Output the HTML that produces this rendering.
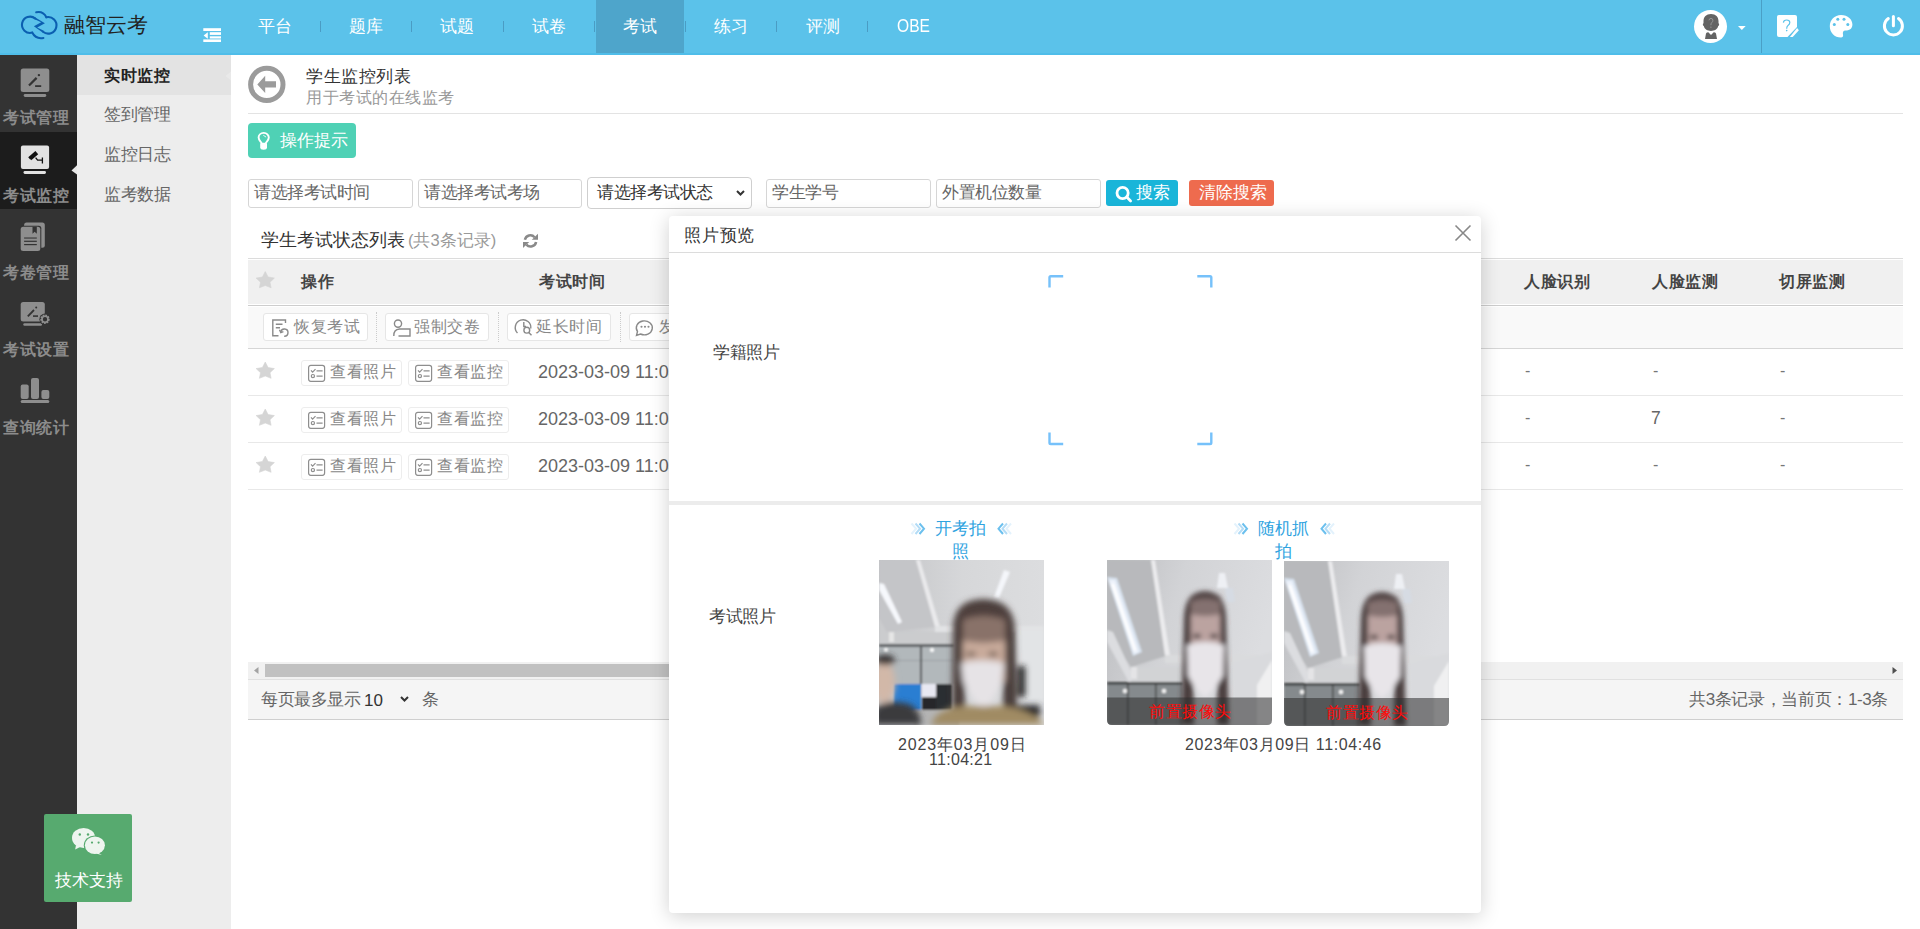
<!DOCTYPE html>
<html><head><meta charset="utf-8">
<style>
*{box-sizing:border-box;margin:0;padding:0}
html,body{width:1920px;height:929px;overflow:hidden;background:#fff;font-family:"Liberation Sans",sans-serif;color:#333}
.a{position:absolute}
.t{position:absolute;white-space:nowrap;line-height:1}
.nav{color:#fff;font-size:17.3px;margin-top:0.5px}
.sep{position:absolute;top:21px;width:1px;height:11px;background:#4a9cc4}
.slab{left:3px;font-size:16px;letter-spacing:.65px;font-weight:bold;color:#8c8c8c;margin-top:2px}
.subi{left:104px;font-size:16.5px;letter-spacing:-.4px;color:#666;margin-top:0px}
.inp{position:absolute;top:179px;height:29px;border:1px solid #d6d6d6;border-radius:3px;font-size:17px;letter-spacing:-.45px;color:#666;padding-left:5px;line-height:25px;white-space:nowrap}
.tb{position:absolute;top:313px;height:28px;border:1px solid #e6e6e6;border-radius:3px;background:#fff;font-size:16px;letter-spacing:.5px;color:#888;line-height:26px;white-space:nowrap}
.vb{position:absolute;height:26px;border:1px solid #ededed;border-radius:3px;background:#fff;font-size:16px;letter-spacing:.5px;color:#888;line-height:22px;white-space:nowrap}
.hd{font-size:16px;letter-spacing:.7px;font-weight:bold;color:#444}
.dash{font-size:16px;color:#777}
</style></head><body>
<!-- ============ TOP BAR ============ -->
<div class="a" style="left:0;top:0;width:1920px;height:55px;background:#5bc2ea"></div>
<div class="a" style="left:0;top:53px;width:1920px;height:2px;background:#4fbde9"></div>
<div class="a" style="left:596px;top:0;width:88px;height:53px;background:#4ea5cb"></div>
<svg class="a" style="left:0;top:0" width="80" height="55">
<g stroke="#0b5fb1" stroke-width="2.1" fill="none" stroke-linecap="round">
<path d="M36.2,12.3 Q43,10.8 46.4,17.2"/>
<path d="M46.4,17.2 A8.3,8.3 0 1 1 43,31.8"/>
<path d="M35.3,18.6 A8.1,8.1 0 1 0 32.2,32.6 Q35.8,39.5 43.4,38"/>
</g>
<path d="M34.9,17.3 L44.9,23.3 L37.2,27.6 L43.8,30.8 L42.6,32.6 L33.9,26.2 L41.2,22.2 L35.2,19.5 Z" fill="#0b5fb1"/>
</svg>
<div class="t" style="left:64px;top:15px;font-size:20.6px;color:#222">融智云考</div>
<svg class="a" style="left:200px;top:25px" width="25" height="20">
<rect x="3.3" y="3.2" width="17.7" height="2.8" fill="#fff"/>
<rect x="9.8" y="7.2" width="11.2" height="2.7" fill="#fff"/>
<rect x="9.8" y="11.3" width="11.2" height="2.2" fill="#fff"/>
<rect x="3.3" y="14.4" width="17.7" height="2.6" fill="#fff"/>
<path d="M3.6,10.4 L7.8,7.2 L7.8,13.8 Z" fill="#fff"/>
</svg>
<div class="t nav" style="left:258px;top:17px">平台</div>
<div class="sep" style="left:320px"></div>
<div class="t nav" style="left:349px;top:17px">题库</div>
<div class="sep" style="left:411px"></div>
<div class="t nav" style="left:440px;top:17px">试题</div>
<div class="sep" style="left:503px"></div>
<div class="t nav" style="left:532px;top:17px">试卷</div>
<div class="sep" style="left:594px"></div>
<div class="t nav" style="left:623px;top:17px">考试</div>
<div class="sep" style="left:685px"></div>
<div class="t nav" style="left:714px;top:17px">练习</div>
<div class="sep" style="left:776px"></div>
<div class="t nav" style="left:806px;top:17px">评测</div>
<div class="sep" style="left:867px"></div>
<div class="t nav" style="left:897px;top:16px;font-size:18.8px;transform:scaleX(.83);transform-origin:0 0">OBE</div>
<!-- avatar -->
<div class="a" style="left:1694px;top:10px;width:33px;height:33px;border-radius:50%;background:#fff"></div>
<svg class="a" style="left:1694px;top:10px" width="33" height="33">
<path d="M17,3.9 C21.8,3.9 24.5,7 24.5,11 L24.5,13.3 C25.4,13.8 25.4,15.6 24.2,16.1 C23.4,19.5 20.5,21 17,21 C13.5,21 10.6,19.5 9.8,16.1 C8.6,15.6 8.6,13.8 9.5,13.3 L9.5,11 C9.5,7 12.2,3.9 17,3.9 Z" fill="#636363"/>
<path d="M11,28.9 L12,23.6 Q12.6,22.2 14.3,22.2 L17,25 L19.7,22.2 Q21.4,22.2 22,23.6 L23,28.9 Z" fill="#636363"/>
<path d="M15,10.3 Q15.2,8.4 17,8.4 Q18.9,8.4 18.9,10.3 Q18.9,11.8 17.6,12.8 Q16.9,13.4 16.9,15.2" stroke="#9a9a9a" stroke-width="0.9" fill="none"/>
<circle cx="16.9" cy="17.2" r="0.6" fill="#9a9a9a"/>
</svg>
<svg class="a" style="left:1736px;top:24px" width="12" height="8"><path d="M2,2 L9.7,2 L5.85,6 Z" fill="#fff"/></svg>
<div class="a" style="left:1761px;top:0;width:1px;height:53px;background:#4a9fc6"></div>
<svg class="a" style="left:1770px;top:8px" width="140" height="38">
<path d="M8.8,7 L25,7 Q27,7 27,9 L27,18.9 L17.5,28.9 L9,28.9 Q7,28.9 7,26.9 L7,8.8 Q7,7 8.8,7 Z" fill="#fff"/>
<path d="M19.9,28.9 L22.7,28.9 L28.9,22.3 L27.1,19.9 Z" fill="#fff"/>
<path d="M13.4,14.6 Q13.6,12 16.6,12 Q19.8,12 19.8,14.6 Q19.8,16.4 18,17.6 Q16.7,18.6 16.7,20.8" stroke="#5bc2ea" stroke-width="1.2" fill="none"/>
<circle cx="16.7" cy="22.6" r="0.8" fill="#5bc2ea"/>
<path d="M71,7 C78,7 82.4,11.5 82.4,16.5 C82.4,21 79,22.5 75.5,22.5 C73,22.5 72.5,24.5 73,26.5 C73.5,28.5 72.5,29.5 71,29.5 C64.5,29.5 59.8,24.5 59.8,18.2 C59.8,12 64.5,7 71,7 Z" fill="#fff"/>
<circle cx="67.8" cy="11.3" r="1.5" fill="#5bc2ea"/><circle cx="74" cy="11.3" r="1.5" fill="#5bc2ea"/>
<circle cx="64.3" cy="16.4" r="1.5" fill="#5bc2ea"/><circle cx="77.8" cy="16.4" r="1.5" fill="#5bc2ea"/>
<path d="M118.3,10.5 A9,9 0 1 0 128.5,10.5" stroke="#fff" stroke-width="3" fill="none" stroke-linecap="round"/>
<path d="M123.4,8.5 L123.4,17.8" stroke="#fff" stroke-width="3" stroke-linecap="round"/>
</svg>

<!-- ============ LEFT SIDEBAR ============ -->
<div class="a" style="left:0;top:55px;width:77px;height:874px;background:#333"></div>
<div class="a" style="left:0;top:132px;width:77px;height:77px;background:#1c1c1c"></div>
<svg class="a" style="left:0;top:55px" width="77" height="400">
<!-- icon1 -->
<g fill="#8e8e8e">
<rect x="20.7" y="13.4" width="28.6" height="23.7" rx="2.5"/>
<rect x="23.7" y="39" width="22.6" height="2.9" rx="1.4"/>
</g>
<path d="M29,30.5 L36.6,22.9" stroke="#333" stroke-width="2.2"/>
<circle cx="38.9" cy="20.1" r="1.2" fill="#333"/>
<rect x="35.1" y="30.2" width="6.1" height="1.8" fill="#333"/>
<!-- icon2 active -->
<g fill="#e2e2e2">
<rect x="20.9" y="90.6" width="28.2" height="23.3" rx="2"/>
<rect x="23.5" y="116" width="22.5" height="3" rx="1.4"/>
</g>
<path d="M29.6,103.8 L36.8,97.7" stroke="#111" stroke-width="4.3"/>
<path d="M35.6,102.6 L37.6,105.2 L42.4,105.2 M42.4,102.5 L42.4,108.6" stroke="#111" stroke-width="1.3" fill="none"/><circle cx="30.3" cy="105.8" r="1.3" fill="#e2e2e2"/>
<!-- icon3 -->
<rect x="24.1" y="167.5" width="20.7" height="25.2" rx="2.5" fill="#8e8e8e"/>
<rect x="19.7" y="170.8" width="21.6" height="26.1" rx="2.5" fill="#333"/>
<rect x="20.7" y="171.8" width="19.6" height="24.1" rx="2.5" fill="#8e8e8e"/>
<path d="M32.5,171.8 L36.8,171.8 L36.8,178.7 L34.65,176.7 L32.5,178.7 Z" fill="#333"/>
<rect x="24.1" y="182.2" width="12.7" height="1.7" fill="#555"/>
<rect x="24.1" y="185.7" width="12.7" height="1.2" fill="#333"/>
<rect x="24.1" y="189" width="12.7" height="1.2" fill="#333"/>
<!-- icon4 -->
<rect x="20.7" y="247" width="24.1" height="19.6" rx="2.5" fill="#8e8e8e"/>
<rect x="23.3" y="268.3" width="18.7" height="2.4" rx="1.2" fill="#8e8e8e"/>
<path d="M27.8,261.3 L34,255" stroke="#333" stroke-width="1.8"/>
<circle cx="36.2" cy="252.4" r="1" fill="#333"/>
<rect x="33" y="260.3" width="5" height="1.6" fill="#333"/>
<circle cx="45" cy="264.2" r="5.6" fill="#333"/>
<circle cx="45" cy="264.2" r="3.6" fill="none" stroke="#8e8e8e" stroke-width="2.2" stroke-dasharray="1.6 0.8"/>
<circle cx="45" cy="264.2" r="3" fill="none" stroke="#8e8e8e" stroke-width="1.6"/>
<!-- icon5 -->
<g fill="#8e8e8e">
<rect x="20.7" y="329.5" width="8" height="14.5" rx="2"/>
<rect x="31" y="323" width="8" height="21" rx="2"/>
<rect x="41.4" y="335.1" width="7.9" height="8.9" rx="2"/>
<rect x="20.7" y="345" width="28.6" height="3" rx="1.5"/>
</g>
<!-- pointer triangle -->
<path d="M71.5,115.5 L77.5,109.7 L77.5,119.8 Z" fill="#e6e6e6"/>
</svg>
<div class="t slab" style="top:108px">考试管理</div>
<div class="t slab" style="top:186px">考试监控</div>
<div class="t slab" style="top:263px">考卷管理</div>
<div class="t slab" style="top:340px">考试设置</div>
<div class="t slab" style="top:418px">查询统计</div>

<!-- ============ SUBMENU ============ -->
<div class="a" style="left:77px;top:55px;width:154px;height:874px;background:#ededed"></div>
<div class="a" style="left:77px;top:55px;width:154px;height:40px;background:#e3e3e3"></div>
<svg class="a" style="left:224px;top:68px" width="8" height="16"><path d="M1.5,8 L7,3.5 L7,12.5 Z" fill="#e9e9e9"/></svg>
<div class="t subi" style="top:67px;font-weight:bold;color:#222;font-size:16px;letter-spacing:.65px;margin-top:1px">实时监控</div>
<div class="t subi" style="top:106px">签到管理</div>
<div class="t subi" style="top:146px">监控日志</div>
<div class="t subi" style="top:186px">监考数据</div>

<!-- tech support -->
<div class="a" style="left:44px;top:814px;width:88px;height:88px;background:#57aa6f;border-radius:2px"></div>
<svg class="a" style="left:44px;top:816px" width="88" height="88">
<ellipse cx="39.6" cy="21.9" rx="11.6" ry="10" fill="#eef5ef"/>
<path d="M32,29 L31.2,33.6 L37,30.5 Z" fill="#eef5ef"/>
<ellipse cx="50.9" cy="29.3" rx="11.1" ry="9.9" fill="#57aa6f"/>
<ellipse cx="50.9" cy="29.3" rx="10" ry="8.8" fill="#eef5ef"/>
<path d="M54,36.5 L57.8,39 L52,37.5 Z" fill="#eef5ef"/>
<circle cx="35.8" cy="18.5" r="1.2" fill="#57aa6f"/><circle cx="44" cy="18.5" r="1.2" fill="#57aa6f"/>
<circle cx="48" cy="26.6" r="1.1" fill="#57aa6f"/><circle cx="54.6" cy="26.6" r="1.1" fill="#57aa6f"/>
</svg>
<div class="t" style="left:55px;top:872px;font-size:17px;color:#fff">技术支持</div>

<!-- ============ CONTENT HEADER ============ -->
<svg class="a" style="left:246px;top:63px" width="42" height="42">
<circle cx="20.8" cy="21.4" r="16.2" stroke="#9b9b9b" stroke-width="5" fill="none"/>
<path d="M11.3,21.4 L19.2,12.8 L19.2,18.2 L30,18.2 L30,24.4 L19.2,24.4 L19.2,30 Z" fill="#9b9b9b"/>
</svg>
<div class="t" style="left:306px;top:68px;font-size:17.4px;letter-spacing:.5px;color:#333">学生监控列表</div>
<div class="t" style="left:306px;top:89px;font-size:16.1px;letter-spacing:.55px;color:#999">用于考试的在线监考</div>
<div class="a" style="left:248px;top:113px;width:1655px;height:1px;background:#e3e3e3"></div>

<div class="a" style="left:248px;top:123px;width:108px;height:35px;background:#4fd1b5;border-radius:4px"></div>
<svg class="a" style="left:254px;top:130px" width="20" height="22">
<path d="M9.7,2.9 C6.6,2.9 4.6,5.1 4.6,7.6 C4.6,9.6 5.9,10.8 6.9,12 C7.5,12.7 7.8,13.2 7.8,13.6 L11.6,13.6 C11.6,13.2 11.9,12.7 12.5,12 C13.5,10.8 14.8,9.6 14.8,7.6 C14.8,5.1 12.8,2.9 9.7,2.9 Z" stroke="#fff" stroke-width="1.9" fill="none"/>
<path d="M6.2,13.3 L13,13.3 L13,17.3 Q13,19.8 9.6,19.8 Q6.2,19.8 6.2,17.3 Z" fill="#fff"/>
<path d="M9.3,5.3 L12.1,7.1" stroke="#e8fbf6" stroke-width="1"/>
</svg>
<div class="t" style="left:280px;top:132px;font-size:17px;color:#fff">操作提示</div>

<!-- filters -->
<div class="inp" style="left:248px;width:165px">请选择考试时间</div>
<div class="inp" style="left:418px;width:164px">请选择考试考场</div>
<div class="inp" style="left:587px;top:177px;height:32px;width:165px;color:#333;padding-left:9px;line-height:30px;border-color:#cfcfcf;border-radius:4px">请选择考试状态</div>
<svg class="a" style="left:734px;top:188px" width="14" height="12"><path d="M3,3 L6.5,6.5 L10,3" stroke="#333" stroke-width="2" fill="none"/></svg>
<div class="inp" style="left:766px;width:165px">学生学号</div>
<div class="inp" style="left:936px;width:165px">外置机位数量</div>
<div class="a" style="left:1106px;top:180px;width:72px;height:26px;background:#1ab5d9;border-radius:3px"></div>
<svg class="a" style="left:1112px;top:182px" width="24" height="22">
<circle cx="10.6" cy="11" r="5.6" stroke="#fff" stroke-width="2.8" fill="none"/>
<path d="M15,15.3 L18.6,18.9" stroke="#fff" stroke-width="2.8" stroke-linecap="round"/>
</svg>
<div class="t" style="left:1136px;top:184px;font-size:17px;color:#fff">搜索</div>
<div class="a" style="left:1189px;top:180px;width:85px;height:26px;background:#ee6b4e;border-radius:3px"></div>
<div class="t" style="left:1199px;top:184px;font-size:17px;color:#fff">清除搜索</div>

<!-- ============ TABLE ============ -->
<div class="t" style="left:261px;top:232px;font-size:17.8px;color:#333">学生考试状态列表</div>
<div class="t" style="left:408px;top:232px;font-size:16.5px;color:#999">(共3条记录)</div>
<svg class="a" style="left:520px;top:231px" width="20" height="20">
<path d="M4.9,8.8 A5.6,5.6 0 0 1 14.6,6.2" stroke="#8a8a8a" stroke-width="2.5" fill="none"/>
<path d="M11.8,8.8 L18,8.8 L18,2.8 Z" fill="#8a8a8a"/>
<path d="M16.1,11 A5.6,5.6 0 0 1 6.4,13.6" stroke="#8a8a8a" stroke-width="2.5" fill="none"/>
<path d="M3,11 L9.2,11 L3,17 Z" fill="#8a8a8a"/>
</svg>
<div class="a" style="left:248px;top:258px;width:1655px;height:1px;background:#dcdcdc"></div>
<div class="a" style="left:248px;top:260px;width:1655px;height:44px;background:#f0f0f0"></div>
<div class="a" style="left:248px;top:305px;width:1655px;height:1px;background:#cdcdcd"></div>
<div class="a" style="left:248px;top:307px;width:1655px;height:41px;background:#f9f9f9"></div>
<div class="a" style="left:248px;top:348px;width:1655px;height:1px;background:#d6d6d6"></div>
<div class="a" style="left:248px;top:395px;width:1655px;height:1px;background:#e8e8e8"></div>
<div class="a" style="left:248px;top:442px;width:1655px;height:1px;background:#e8e8e8"></div>
<div class="a" style="left:248px;top:489px;width:1655px;height:1px;background:#e8e8e8"></div>

<svg class="a" style="left:255px;top:270px" width="20" height="220">
<defs><path id="st" d="M10.25,1.5 L13.1,7 L19.4,8.1 L15,12.2 L16.1,17.8 L10.25,15.5 L4.4,17.8 L5.5,12.2 L1.1,8.1 L7.4,7 Z" stroke="#d5d5d5" stroke-width=".6" stroke-linejoin="round"/></defs>
<use href="#st" fill="#d5d5d5"/>
<use href="#st" y="90.5" fill="#d5d5d5"/>
<use href="#st" y="137.5" fill="#d5d5d5"/>
<use href="#st" y="184.5" fill="#d5d5d5"/>
</svg>
<div class="t hd" style="left:301px;top:274px">操作</div>
<div class="t hd" style="left:539px;top:274px">考试时间</div>
<div class="t hd" style="left:1524px;top:274px">人脸识别</div>
<div class="t hd" style="left:1652px;top:274px">人脸监测</div>
<div class="t hd" style="left:1779px;top:274px">切屏监测</div>

<!-- toolbar -->
<div class="tb" style="left:263px;width:105px;padding-left:30px">恢复考试</div>
<div class="tb" style="left:385px;width:104px;padding-left:28px">强制交卷</div>
<div class="tb" style="left:507px;width:104px;padding-left:28px">延长时间</div>
<div class="tb" style="left:629px;width:60px;padding-left:29px">发</div>
<div class="a" style="left:376px;top:312px;width:0;height:30px;border-left:1px dotted #ccc"></div>
<div class="a" style="left:498px;top:312px;width:0;height:30px;border-left:1px dotted #ccc"></div>
<div class="a" style="left:620px;top:312px;width:0;height:30px;border-left:1px dotted #ccc"></div>
<svg class="a" style="left:263px;top:313px" width="420" height="28">
<g stroke="#8a8a8a" stroke-width="1.4" fill="none">
<path d="M22.5,10 L22.5,7 L9.8,7 L9.8,22.8 L15.5,22.8"/>
<path d="M12.8,11.2 L19.5,11.2 M12.8,14.8 L17,14.8"/>
<path d="M17.8,19.2 A3.6,3.6 0 1 1 21.2,23.2"/>
<path d="M16.5,16.8 L17.8,19.6 L20.4,18.6"/>
<circle cx="135" cy="10.6" r="3.6"/>
<path d="M130.8,23 Q130.5,16.5 136.5,16 L147,16 L147,23 L135.5,23"/>
<path d="M254.5,20 A7.8,7.8 0 1 1 267.8,15.5"/>
<path d="M260.8,9 L260.8,13.5 L263,13.5"/>
<circle cx="263.8" cy="17.2" r="2.9"/>
<path d="M265.8,19.4 L268.5,22.2"/>
<path d="M377.5,21 A8,7 0 1 0 374.5,18.5 L373.5,22.5 Z"/>
</g>
<g fill="#8a8a8a"><circle cx="378.5" cy="13.8" r="1.05"/><circle cx="382" cy="13.8" r="1.05"/><circle cx="385.5" cy="13.8" r="1.05"/></g>
</svg>

<!-- rows -->
<div class="vb" style="left:301px;top:360px;width:101px;padding-left:28px">查看照片</div>
<div class="vb" style="left:408px;top:360px;width:101px;padding-left:28px">查看监控</div>
<div class="vb" style="left:301px;top:407px;width:101px;padding-left:28px">查看照片</div>
<div class="vb" style="left:408px;top:407px;width:101px;padding-left:28px">查看监控</div>
<div class="vb" style="left:301px;top:454px;width:101px;padding-left:28px">查看照片</div>
<div class="vb" style="left:408px;top:454px;width:101px;padding-left:28px">查看监控</div>
<svg class="a" style="left:301px;top:360px" width="220" height="130">
<defs><g id="ck" stroke="#8e8e8e" stroke-width="1.2" fill="none">
<rect x="7.6" y="5.3" width="16" height="16" rx="2.2"/>
<path d="M10,10.3 L11.6,12.2 L14.5,9.2 M15.5,10.9 L21.6,10.9 M15.5,16.2 L21.6,16.2"/>
<circle cx="11.9" cy="16.1" r="1.6"/>
</g></defs>
<use href="#ck"/><use href="#ck" x="107"/>
<use href="#ck" y="47"/><use href="#ck" x="107" y="47"/>
<use href="#ck" y="94"/><use href="#ck" x="107" y="94"/>
</svg>
<div class="t" style="left:538px;top:363px;font-size:18px;color:#666">2023-03-09 11:04</div>
<div class="t" style="left:538px;top:410px;font-size:18px;color:#666">2023-03-09 11:04</div>
<div class="t" style="left:538px;top:457px;font-size:18px;color:#666">2023-03-09 11:04</div>
<div class="t dash" style="left:1525px;top:363px">-</div>
<div class="t dash" style="left:1653px;top:363px">-</div>
<div class="t dash" style="left:1780px;top:363px">-</div>
<div class="t dash" style="left:1525px;top:410px">-</div>
<div class="t" style="left:1651px;top:410px;font-size:17.5px;color:#666">7</div>
<div class="t dash" style="left:1780px;top:410px">-</div>
<div class="t dash" style="left:1525px;top:457px">-</div>
<div class="t dash" style="left:1653px;top:457px">-</div>
<div class="t dash" style="left:1780px;top:457px">-</div>

<!-- scrollbar -->
<div class="a" style="left:248px;top:662px;width:1655px;height:17px;background:#f1f1f1"></div>
<div class="a" style="left:265px;top:664px;width:700px;height:13px;background:#c1c1c1"></div>
<svg class="a" style="left:250px;top:664px" width="14" height="13"><path d="M4,6.5 L8.5,3 L8.5,10 Z" fill="#a3a3a3"/></svg>
<svg class="a" style="left:1887px;top:664px" width="14" height="13"><path d="M10,6.5 L5.5,3 L5.5,10 Z" fill="#505050"/></svg>
<!-- footer -->
<div class="a" style="left:248px;top:679px;width:1655px;height:41px;background:#f5f5f5;border-top:1px solid #e0e0e0;border-bottom:1px solid #cfcfcf"></div>
<div class="t" style="left:261px;top:691px;font-size:17px;letter-spacing:-.4px;color:#666">每页最多显示</div>
<div class="t" style="left:364px;top:692px;font-size:17px;color:#333">10</div>
<svg class="a" style="left:398px;top:694px" width="14" height="12"><path d="M3,3 L6.5,6.5 L10,3" stroke="#333" stroke-width="2" fill="none"/></svg>
<div class="t" style="left:422px;top:691px;font-size:17px;color:#666">条</div>
<div class="t" style="left:1689px;top:691px;font-size:17px;letter-spacing:-.35px;color:#666">共3条记录，当前页：1-3条</div>

<!-- ============ DIALOG ============ -->
<div class="a" style="left:669px;top:216px;width:812px;height:697px;background:#fff;border-radius:4px;box-shadow:0 3px 20px rgba(0,0,0,.19)"></div>
<div class="t" style="left:684px;top:227px;font-size:17px;letter-spacing:.8px;color:#333">照片预览</div>
<svg class="a" style="left:1452px;top:222px" width="22" height="22"><path d="M3.5,3.5 L18.5,18.5 M18.5,3.5 L3.5,18.5" stroke="#888" stroke-width="1.6"/></svg>
<div class="a" style="left:669px;top:252px;width:812px;height:1px;background:#dcdcdc"></div>
<div class="t" style="left:713px;top:344px;font-size:17px;letter-spacing:-.35px;color:#444">学籍照片</div>
<svg class="a" style="left:1040px;top:268px" width="180" height="185">
<g stroke="#76c1fa" stroke-width="2.4" fill="none">
<path d="M9.5,19.4 L9.5,9.6 Q9.5,8.3 10.8,8.3 L23.2,8.3"/>
<path d="M157.3,8.3 L170,8.3 Q171.3,8.3 171.3,9.6 L171.3,19.4"/>
<path d="M9.5,164.5 L9.5,174.7 Q9.5,176 10.8,176 L23.2,176"/>
<path d="M157.3,176 L170,176 Q171.3,176 171.3,174.7 L171.3,164.5"/>
</g>
</svg>
<div class="a" style="left:669px;top:501px;width:812px;height:4px;background:#ececec"></div>
<div class="t" style="left:709px;top:608px;font-size:17px;letter-spacing:-.35px;color:#444">考试照片</div>

<!-- start photo header -->
<svg class="a" style="left:905px;top:518px" width="115" height="22">
<g stroke-width="2" fill="none">
<path d="M6.5,5.5 L11,10.7 L6.5,16" stroke="#e3f2fc"/>
<path d="M10.5,5.5 L15,10.7 L10.5,16" stroke="#b3dcf6"/>
<path d="M14.5,5.5 L19,10.7 L14.5,16" stroke="#6cc0ee"/>
<path d="M98,5.5 L93.5,10.7 L98,16" stroke="#6cc0ee"/>
<path d="M102,5.5 L97.5,10.7 L102,16" stroke="#b3dcf6"/>
<path d="M106,5.5 L101.5,10.7 L106,16" stroke="#e3f2fc"/>
</g>
</svg>
<div class="t" style="left:935px;top:520px;font-size:17px;color:#2fa3df">开考拍</div>
<div class="t" style="left:952px;top:543px;font-size:17px;color:#2fa3df">照</div>
<svg class="a" style="left:1228px;top:518px" width="115" height="22">
<g stroke-width="2" fill="none">
<path d="M6.5,5.5 L11,10.7 L6.5,16" stroke="#e3f2fc"/>
<path d="M10.5,5.5 L15,10.7 L10.5,16" stroke="#b3dcf6"/>
<path d="M14.5,5.5 L19,10.7 L14.5,16" stroke="#6cc0ee"/>
<path d="M98,5.5 L93.5,10.7 L98,16" stroke="#6cc0ee"/>
<path d="M102,5.5 L97.5,10.7 L102,16" stroke="#b3dcf6"/>
<path d="M106,5.5 L101.5,10.7 L106,16" stroke="#e3f2fc"/>
</g>
</svg>
<div class="t" style="left:1258px;top:520px;font-size:17px;color:#2fa3df">随机抓</div>
<div class="t" style="left:1275px;top:543px;font-size:17px;color:#2fa3df">拍</div>

<svg class="a" style="left:879px;top:560px" width="165" height="165" viewBox="0 0 165 165">
<defs>
<filter id="b1" x="-10%" y="-10%" width="120%" height="120%"><feGaussianBlur stdDeviation="0.9"/></filter>
<filter id="b3" x="-20%" y="-20%" width="140%" height="140%"><feGaussianBlur stdDeviation="3"/></filter>
<linearGradient id="ceil1" x1="0" y1="0" x2="1" y2="0"><stop offset="0" stop-color="#c2c3c6"/><stop offset="0.5" stop-color="#d6d7d9"/><stop offset="1" stop-color="#dcdddf"/></linearGradient>
</defs>
<rect width="165" height="165" fill="url(#ceil1)"/>
<g filter="url(#b1)">
<path d="M0,0 L37,0 L57,67 L0,72 Z" fill="#c4c5c8"/>
<path d="M37,0 L41,0 L61,67 L56,67 Z" fill="#eaeaec"/>
<rect x="56" y="66" width="109" height="6" fill="#e2e3e5"/>
<path d="M0,58 L8,72 L75,72 L75,85 L0,85 Z" fill="#cbccce"/>
<rect x="10" y="72" width="5" height="10" fill="#e6e6e6"/>
<rect x="0" y="84" width="75" height="3" fill="#5f6265"/>
<path d="M0,23 L5,24 L23,62 L19,64 L0,30 Z" fill="#f6f8fc"/>
<path d="M125,10 L131,12 L120,38 L115,37 Z" fill="#f4f6fa"/>
<rect x="0" y="87" width="75" height="37" fill="#b2b8bb"/>
<rect x="0" y="100" width="75" height="1" fill="#9aa0a3"/>
<rect x="41" y="87" width="2" height="37" fill="#4d5153"/>
<circle cx="7" cy="90" r="2" fill="#fff"/><circle cx="53" cy="90" r="2" fill="#fff"/>
<rect x="15" y="124" width="27" height="27" fill="#2c7ed2"/>
<rect x="43" y="124" width="14" height="13" fill="#e8e8f2"/>
<rect x="43" y="137" width="14" height="14" fill="#25282c"/>
<rect x="57" y="124" width="16" height="27" fill="#2a2d33"/>
<rect x="135" y="72" width="30" height="78" fill="#e2e4e6"/>
<rect x="128" y="72" width="8" height="80" fill="#c0c2c4"/>
<rect x="35" y="150" width="45" height="15" fill="#b4b4b4"/>
</g>
<g filter="url(#b3)">
<ellipse cx="5" cy="122" rx="11" ry="21" fill="#d2b8a8"/>
<ellipse cx="6" cy="100" rx="10" ry="5" fill="#2e2a2a"/>
<path d="M-5,150 Q5,138 30,144 Q42,150 42,165 L-5,165 Z" fill="#3a3b3e"/>
<path d="M139,106 L146,106 L146,137 L139,137 Z" fill="#1c1c1e"/>
<rect x="137" y="145" width="24" height="12" fill="#2a2b2e"/>
<path d="M74,66 Q76,39 105,39 Q134,40 136,68 L138,158 L124,158 L124,70 L86,70 L86,158 L73,158 Z" fill="#4a3d3a"/>
<path d="M84,60 Q104,52 126,60 L126,122 L84,122 Z" fill="#c9ab9b"/>
<path d="M82,50 Q104,42 128,52 L128,80 Q104,86 82,80 Z" fill="#54443f" opacity=".55"/>
<ellipse cx="92" cy="94" rx="4.5" ry="2" fill="#3f3432"/><ellipse cx="114" cy="94" rx="4.5" ry="2" fill="#3f3432"/>
<path d="M82,103 Q103,98 125,103 L123,122 Q113,142 105,152 Q96,142 84,122 Z" fill="#e6e3e6"/>
<path d="M52,165 Q58,147 88,146 L122,146 Q152,149 166,165 Z" fill="#a08b63"/>
</g>
</svg>
<svg class="a" style="left:1107px;top:560px" width="165" height="165" viewBox="0 0 165 165">
<defs>
<filter id="c1a" x="-10%" y="-10%" width="120%" height="120%"><feGaussianBlur stdDeviation="0.9"/></filter>
<filter id="c3a" x="-20%" y="-20%" width="140%" height="140%"><feGaussianBlur stdDeviation="2.6"/></filter>
<linearGradient id="cga" x1="0" y1="0" x2="1" y2="0.3"><stop offset="0" stop-color="#bcbdc0"/><stop offset="0.45" stop-color="#d2d3d6"/><stop offset="1" stop-color="#dcdde0"/></linearGradient>
<clipPath id="cla"><path d="M0,0 L165,0 L165,160 Q165,165 160,165 L5,165 Q0,165 0,160 Z"/></clipPath>
</defs>
<g clip-path="url(#cla)">
<rect width="165" height="165" fill="url(#cga)"/>
<g filter="url(#c1a)">
<path d="M0,0 L44,0 L59,96 L24,107 L0,72 Z" fill="#b8b9bc"/>
<path d="M44,0 L48,0 L63,96 L58,96 Z" fill="#ececee"/>
<rect x="58" y="95" width="107" height="8" fill="#dadbdd"/>
<path d="M0,70 L6,72 L30,124 L23,124 L0,82 Z" fill="#dcdde0"/>
<rect x="24" y="107" width="52" height="17" fill="#d2d3d5"/>
<rect x="24" y="107" width="6" height="12" fill="#e4e4e6"/>
<path d="M0,17 L10,18 L35,92 L26,96 Z" fill="#d8e2ee"/><path d="M2,20 L8,20 L32,92 L27,94 Z" fill="#eef3fb"/>
<path d="M4,24 L7,24 L29,90 L27,91 Z" fill="#ffffff"/>
<path d="M112,13 L118,13 L121,28 L110,28 Z" fill="#eef0f4"/>
<path d="M118,28 L126,28 L128,42 L120,42 Z" fill="#d6dbe3"/>
<rect x="0" y="122" width="76" height="43" fill="#858a8d"/>
<rect x="0" y="122" width="76" height="2.5" fill="#3c3f41"/>
<rect x="20" y="124" width="1.5" height="41" fill="#444"/><rect x="48" y="124" width="1.5" height="41" fill="#444"/>
<circle cx="18" cy="131" r="2.2" fill="#f4f4f4"/><circle cx="57" cy="131" r="2.2" fill="#f4f4f4"/>
<path d="M127,102 L165,92 L165,165 L127,165 Z" fill="#d9dadd"/>
<path d="M150,125 L165,100 L165,165 L150,165 Z" fill="#f0f0f1"/>
</g>
<g filter="url(#c3a)">
<path d="M77,58 Q78,31 98,31 Q118,31 119,58 L122,165 L110,165 L111,62 L85,62 L87,165 L74,165 Z" fill="#4a3e3e"/>
<path d="M84,42 Q98,36 113,42 L113,96 L84,96 Z" fill="#bba3a0"/>
<path d="M83,36 Q98,30 114,36 L114,54 Q98,58 83,54 Z" fill="#5f5050" opacity=".6"/>
<ellipse cx="90" cy="76" rx="3.8" ry="2.2" fill="#3a3133"/><ellipse cx="107" cy="76" rx="3.8" ry="2.2" fill="#3a3133"/>
<path d="M80,85 Q98,79 117,85 L116,116 Q108,130 98,138 Q88,130 81,116 Z" fill="#e8e5e9"/>
</g>
</g>
<path d="M0,137.5 L165,137.5 L165,160 Q165,165 160,165 L5,165 Q0,165 0,160 Z" fill="rgba(45,45,45,.55)"/>
<text x="42" y="157" font-size="16" letter-spacing="0.6" fill="#ff0a0a" font-family="Liberation Sans">前置摄像头</text>
</svg>
<svg class="a" style="left:1284px;top:561px" width="165" height="165" viewBox="0 0 165 165">
<defs>
<filter id="c1b" x="-10%" y="-10%" width="120%" height="120%"><feGaussianBlur stdDeviation="0.9"/></filter>
<filter id="c3b" x="-20%" y="-20%" width="140%" height="140%"><feGaussianBlur stdDeviation="2.6"/></filter>
<linearGradient id="cgb" x1="0" y1="0" x2="1" y2="0.3"><stop offset="0" stop-color="#bcbdc0"/><stop offset="0.45" stop-color="#d2d3d6"/><stop offset="1" stop-color="#dcdde0"/></linearGradient>
<clipPath id="clb"><path d="M0,0 L165,0 L165,160 Q165,165 160,165 L5,165 Q0,165 0,160 Z"/></clipPath>
</defs>
<g clip-path="url(#clb)">
<rect width="165" height="165" fill="url(#cgb)"/>
<g filter="url(#c1b)">
<path d="M0,0 L44,0 L59,96 L24,107 L0,72 Z" fill="#b8b9bc"/>
<path d="M44,0 L48,0 L63,96 L58,96 Z" fill="#ececee"/>
<rect x="58" y="95" width="107" height="8" fill="#dadbdd"/>
<path d="M0,70 L6,72 L30,124 L23,124 L0,82 Z" fill="#dcdde0"/>
<rect x="24" y="107" width="52" height="17" fill="#d2d3d5"/>
<rect x="24" y="107" width="6" height="12" fill="#e4e4e6"/>
<path d="M0,17 L10,18 L35,92 L26,96 Z" fill="#d8e2ee"/><path d="M2,20 L8,20 L32,92 L27,94 Z" fill="#eef3fb"/>
<path d="M4,24 L7,24 L29,90 L27,91 Z" fill="#ffffff"/>
<path d="M112,13 L118,13 L121,28 L110,28 Z" fill="#eef0f4"/>
<path d="M118,28 L126,28 L128,42 L120,42 Z" fill="#d6dbe3"/>
<rect x="0" y="122" width="76" height="43" fill="#858a8d"/>
<rect x="0" y="122" width="76" height="2.5" fill="#3c3f41"/>
<rect x="20" y="124" width="1.5" height="41" fill="#444"/><rect x="48" y="124" width="1.5" height="41" fill="#444"/>
<circle cx="18" cy="131" r="2.2" fill="#f4f4f4"/><circle cx="57" cy="131" r="2.2" fill="#f4f4f4"/>
<path d="M127,102 L165,92 L165,165 L127,165 Z" fill="#d9dadd"/>
<path d="M150,125 L165,100 L165,165 L150,165 Z" fill="#f0f0f1"/>
</g>
<g filter="url(#c3b)">
<path d="M77,58 Q78,31 98,31 Q118,31 119,58 L122,165 L110,165 L111,62 L85,62 L87,165 L74,165 Z" fill="#4a3e3e"/>
<path d="M84,42 Q98,36 113,42 L113,96 L84,96 Z" fill="#bba3a0"/>
<path d="M83,36 Q98,30 114,36 L114,54 Q98,58 83,54 Z" fill="#5f5050" opacity=".6"/>
<ellipse cx="90" cy="76" rx="3.8" ry="2.2" fill="#3a3133"/><ellipse cx="107" cy="76" rx="3.8" ry="2.2" fill="#3a3133"/>
<path d="M80,85 Q98,79 117,85 L116,116 Q108,130 98,138 Q88,130 81,116 Z" fill="#e8e5e9"/>
</g>
</g>
<path d="M0,137 L165,137 L165,160 Q165,165 160,165 L5,165 Q0,165 0,160 Z" fill="rgba(45,45,45,.55)"/>
<text x="42" y="157" font-size="16" letter-spacing="0.6" fill="#ff0a0a" font-family="Liberation Sans">前置摄像头</text>
</svg>

<div class="t" style="left:898px;top:737px;font-size:16px;color:#444;letter-spacing:0.85px">2023年03月09日</div>
<div class="t" style="left:929px;top:752px;font-size:16px;color:#444;letter-spacing:0.3px">11:04:21</div>
<div class="t" style="left:1185px;top:737px;font-size:16px;color:#444;letter-spacing:0.6px">2023年03月09日 11:04:46</div>

</body></html>
